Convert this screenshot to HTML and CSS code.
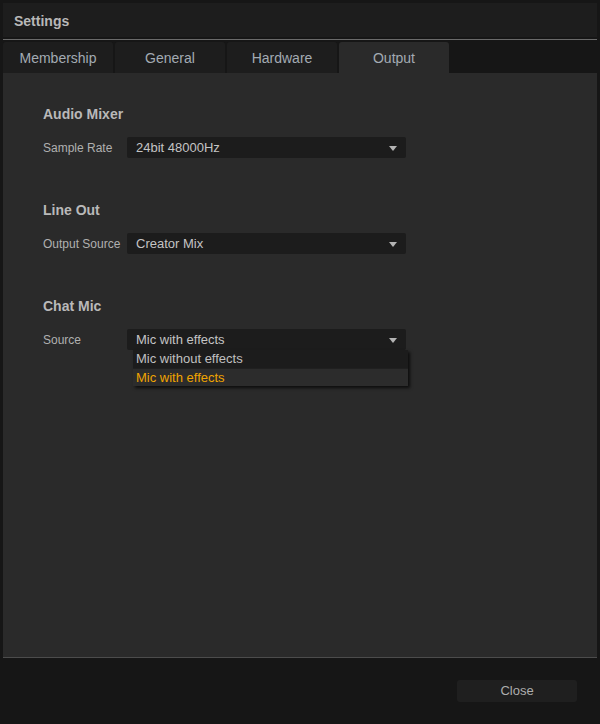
FILE: index.html
```html
<!DOCTYPE html>
<html>
<head>
<meta charset="utf-8"/>
<title>Settings</title>
<link rel="stylesheet" href="styles.css">
</head>
<body>
<div class="window">
  <div class="titlebar">Settings</div>
  <div class="rule"></div>

  <div class="tabs">
    <div class="tab">Membership</div>
    <div class="tab">General</div>
    <div class="tab">Hardware</div>
    <div class="tab active">Output</div>
  </div>

  <div class="panel">
    <div class="section">
      <h3>Audio Mixer</h3>
      <div class="row">
        <span class="label">Sample Rate</span>
        <div class="select"><span>24bit 48000Hz</span><i class="arrow"></i></div>
      </div>
    </div>

    <div class="section">
      <h3>Line Out</h3>
      <div class="row">
        <span class="label">Output Source</span>
        <div class="select"><span>Creator Mix</span><i class="arrow"></i></div>
      </div>
    </div>

    <div class="section">
      <h3>Chat Mic</h3>
      <div class="row">
        <span class="label">Source</span>
        <div class="select open"><span>Mic with effects</span><i class="arrow"></i>
          <ul class="options">
            <li>Mic without effects</li>
            <li class="selected">Mic with effects</li>
          </ul>
        </div>
      </div>
    </div>
  </div>

  <div class="footer">
    <button class="btn">Close</button>
  </div>
</div>
</body>
</html>
```

FILE: styles.css
```css
body {
   margin: 0;
   background-color: #161616;
   font-family: "Liberation Sans", Arial, sans-serif;
   font-size: 12px;
   color: #b4b4b4;
}

.window {
   padding: 3px 3px 0 3px;
   height: 721px;
   display: flex;
   flex-direction: column;
}

.titlebar {
   height: 34px;
   line-height: 37px;
   padding-left: 11px;
   background-color: #1d1d1d;
   font-weight: bold;
   font-size: 14px;
   color: #b8b8b8;
}

.rule {
   height: 1px;
   margin-top: 2px;
   background-color: #6a6a6a;
}

.tabs {
   display: flex;
   gap: 2px;
   margin-top: 2px;
}

.tab {
   width: 110px;
   height: 31px;
   line-height: 33px;
   text-align: center;
   font-size: 14px;
   color: #a3abb3;
   background-color: #1d1d1d;
   border-radius: 3px 3px 0 0;
}

.tab.active {
   background-color: #2a2a2a;
}

.panel {
   flex: 1;
   background-color: #2a2a2a;
   border-bottom: 1px solid #4c4c4c;
   padding: 33px 0 0 40px;
}

.section {
   margin-bottom: 44px;
}

h3 {
   margin: 0 0 15px 0;
   font-size: 14px;
   line-height: 16px;
   color: #b9b9b9;
}

.row {
   display: flex;
   align-items: center;
}

.label {
   width: 84px;
   color: #b0b0b0;
}

.select {
   position: relative;
   width: 279px;
   height: 21px;
   line-height: 21px;
   padding-left: 9px;
   box-sizing: border-box;
   background-color: #1c1c1c;
   border-radius: 2px;
   font-size: 13px;
   color: #c4c4c4;
}

.arrow {
   position: absolute;
   right: 9px;
   top: 9px;
   width: 0;
   height: 0;
   border-left: 4px solid transparent;
   border-right: 4px solid transparent;
   border-top: 5px solid #b4b4b4;
}

.options {
   position: absolute;
   top: 21px;
   left: 6px;
   width: 275px;
   margin: 0;
   padding: 0;
   list-style: none;
   background-color: #1c1c1c;
   box-shadow: 2px 2px 3px rgba(0, 0, 0, 0.7);
   z-index: 2;
}

.options li {
   height: 18px;
   line-height: 17px;
   padding-left: 3px;
   color: #c0c0c0;
}

.options li.selected {
   background-color: #2c2c2c;
   border-top: 1px solid #202020;
   height: 17px;
   color: #f0a400;
}

.footer {
   height: 66px;
   display: flex;
   justify-content: flex-end;
   align-items: flex-start;
   padding: 22px 20px 0 0;
   box-sizing: border-box;
}

.btn {
   width: 120px;
   height: 22px;
   line-height: 20px;
   border: none;
   border-radius: 3px;
   background-color: #1f1f1f;
   color: #aeaeae;
   font-family: "Liberation Sans", Arial, sans-serif;
   font-size: 13px;
}
```
